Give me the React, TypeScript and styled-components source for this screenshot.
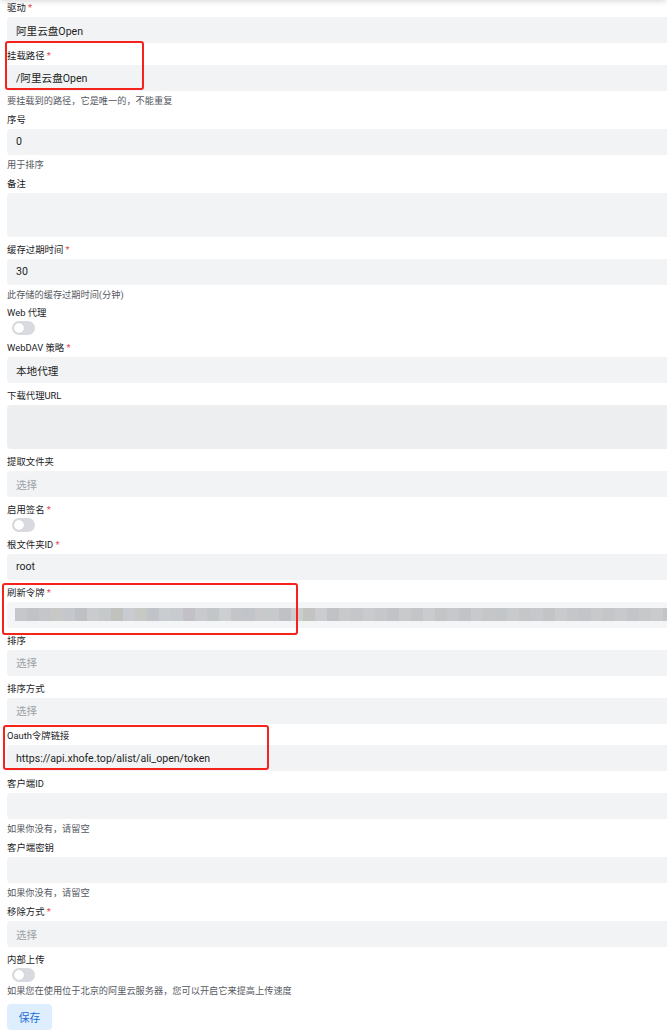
import styled, { createGlobalStyle } from "styled-components";

const GlobalStyle = createGlobalStyle`
  html, body {
    margin: 0;
    padding: 0;
    background: #ffffff;
    overflow: hidden;
  }
  body {
    font-family: Roboto, "Noto Sans CJK SC", sans-serif;
    color: #1b1b1f;
  }
`;

type Mark = { top: number; left: number; width: number; height: number };

type FieldType = {
  label: string;
  required?: boolean;
  kind: "input" | "textarea" | "switch";
  value?: string;
  placeholder?: string;
  helper?: string;
  hovered?: boolean;
  mosaic?: boolean;
  mark?: Mark;
};

const fields: FieldType[] = [
  { label: "驱动", required: true, kind: "input", value: "阿里云盘Open" },
  {
    label: "挂载路径",
    required: true,
    kind: "input",
    value: "/阿里云盘Open",
    helper: "要挂载到的路径，它是唯一的，不能重复",
    mark: { top: -8, left: -2, width: 139, height: 49 },
  },
  { label: "序号", kind: "input", value: "0", helper: "用于排序" },
  { label: "备注", kind: "textarea" },
  {
    label: "缓存过期时间",
    required: true,
    kind: "input",
    value: "30",
    helper: "此存储的缓存过期时间(分钟)",
  },
  { label: "Web 代理", kind: "switch" },
  { label: "WebDAV 策略", required: true, kind: "input", value: "本地代理" },
  { label: "下载代理URL", kind: "textarea", hovered: true },
  { label: "提取文件夹", kind: "input", placeholder: "选择" },
  { label: "启用签名", required: true, kind: "switch" },
  { label: "根文件夹ID", required: true, kind: "input", value: "root" },
  {
    label: "刷新令牌",
    required: true,
    kind: "input",
    mosaic: true,
    mark: { top: -3, left: -5, width: 296, height: 52 },
  },
  { label: "排序", kind: "input", placeholder: "选择" },
  { label: "排序方式", kind: "input", placeholder: "选择" },
  {
    label: "Oauth令牌链接",
    kind: "input",
    value: "https://api.xhofe.top/alist/ali_open/token",
    mark: { top: -4, left: -4, width: 266, height: 45 },
  },
  { label: "客户端ID", kind: "input", helper: "如果你没有，请留空" },
  { label: "客户端密钥", kind: "input", helper: "如果你没有，请留空" },
  { label: "移除方式", required: true, kind: "input", placeholder: "选择" },
  {
    label: "内部上传",
    kind: "switch",
    helper: "如果您在使用位于北京的阿里云服务器，您可以开启它来提高上传速度",
  },
];

// pixelated stand-in for the blurred token value
const mosaicColors = [
  "#c6c7ca", "#c2c1c6", "#c5c6c9", "#c8c9c6", "#c4c7cc", "#bfc0c3",
  "#cacbcd", "#c6c9ca", "#c1c1be", "#c8cbcf", "#c7cac4", "#c0c3c7",
  "#cacdcf", "#c7cace", "#c3c1c5", "#c9cacd", "#c2c6c8", "#cbcfcf",
  "#c4c5c9", "#c1c4c8", "#c9c9cb", "#c6cacc", "#bfc1c4", "#cbcdce",
  "#c3c4c2", "#cacccf", "#c0c2c6", "#c7c9ca", "#c4c6c9", "#c9cacc",
  "#c5c7ca", "#c2c3c6", "#c8cacb", "#c3c5c8", "#c9cbcd", "#c4c5c7",
  "#c6c8cb", "#c1c3c6", "#c8c9cc", "#c5c6c8", "#c3c6c9", "#c9cacb",
  "#c4c6c8", "#c7c8cb", "#c2c4c6", "#c8cacc", "#c5c6c9", "#c3c4c7",
  "#c7c9cb", "#c4c6c9", "#c8c9ca", "#c2c4c7", "#c6c8ca", "#c9cbcc",
  "#c4c5c8",
];

function mosaicGradient() {
  const step = 12;
  const stops = mosaicColors.map(
    (c, i) => `${c} ${i * step}px ${(i + 1) * step}px`
  );
  return `linear-gradient(90deg, ${stops.join(", ")})`;
}

export default function App() {
  return (
    <>
      <GlobalStyle />
      <HeaderShadow />
      <Page>
        <Form>
          {fields.map((f) => (
            <Field key={f.label}>
              <Label $tight={f.kind === "switch"}>
                {f.label}
                {f.required && <Star> *</Star>}
              </Label>
              {f.kind === "input" && (
                <Input $light={f.mosaic}>
                  {f.value && <Value>{f.value}</Value>}
                  {f.placeholder && <Placeholder>{f.placeholder}</Placeholder>}
                  {f.mosaic && (
                    <Mosaic style={{ backgroundImage: mosaicGradient() }} />
                  )}
                </Input>
              )}
              {f.kind === "textarea" && <TextArea $hovered={f.hovered} />}
              {f.kind === "switch" && (
                <Switch>
                  <Knob />
                </Switch>
              )}
              {f.helper && (
                <Helper $afterSwitch={f.kind === "switch"}>{f.helper}</Helper>
              )}
              {f.mark && (
                <RedMark
                  style={{
                    top: f.mark.top,
                    left: f.mark.left,
                    width: f.mark.width,
                    height: f.mark.height,
                  }}
                />
              )}
            </Field>
          ))}
          <SaveButton>保存</SaveButton>
        </Form>
      </Page>
    </>
  );
}

const HeaderShadow = styled.div`
  position: fixed;
  top: -10px;
  left: 0;
  right: 0;
  height: 10px;
  background: #ffffff;
  box-shadow: 0 1px 6px rgba(0, 0, 0, 0.16);
  z-index: 5;
`;

const Page = styled.div`
  width: 667px;
  box-sizing: border-box;
  overflow: hidden;
  padding: 1px 0 0 7px;
`;

const Form = styled.div`
  width: 672px;
  display: flex;
  flex-direction: column;
  gap: 5.9px;
`;

const Field = styled.div`
  position: relative;
  display: flex;
  flex-direction: column;
`;

const Label = styled.div<{ $tight?: boolean }>`
  font-size: 9.4px;
  line-height: 13px;
  margin-bottom: ${(p) => (p.$tight ? "2px" : "3px")};
  color: #1a1a1e;
`;

const Star = styled.span`
  color: #e5484d;
`;

const Input = styled.div<{ $light?: boolean }>`
  position: relative;
  height: 26px;
  border-radius: 4px;
  background: ${(p) => (p.$light ? "#f4f5f7" : "#f1f3f5")};
  display: flex;
  align-items: center;
  padding-left: 9px;
  overflow: hidden;
`;

const Value = styled.span`
  font-size: 10.6px;
  color: #1f1f23;
`;

const Placeholder = styled.span`
  font-size: 10.6px;
  color: #9da1a8;
`;

const Mosaic = styled.div`
  position: absolute;
  left: 8px;
  right: 0;
  top: 6px;
  height: 13px;
`;

const TextArea = styled.div<{ $hovered?: boolean }>`
  height: 44px;
  border-radius: 4px;
  background: ${(p) => (p.$hovered ? "#eceef0" : "#f1f3f5")};
`;

const Switch = styled.div`
  width: 23px;
  height: 14px;
  margin-left: 5px;
  border-radius: 7px;
  background: #d8dadf;
  display: flex;
  align-items: center;
  padding: 0 2px;
  box-sizing: border-box;
`;

const Knob = styled.div`
  width: 10px;
  height: 10px;
  border-radius: 50%;
  background: #ffffff;
  box-shadow: 0 0 1px rgba(0, 0, 0, 0.15);
`;

const Helper = styled.div<{ $afterSwitch?: boolean }>`
  margin-top: ${(p) => (p.$afterSwitch ? "3px" : "4px")};
  font-size: 9.2px;
  line-height: 12px;
  color: #55595f;
`;

const RedMark = styled.div`
  position: absolute;
  border: 2px solid #f5231b;
  border-radius: 3px;
  box-sizing: border-box;
  pointer-events: none;
`;

const SaveButton = styled.button`
  align-self: flex-start;
  width: 45px;
  height: 26px;
  border: none;
  border-radius: 4px;
  background: #dfeeff;
  color: #1b6cd4;
  font-family: Roboto, "Noto Sans CJK SC", sans-serif;
  font-size: 10.8px;
  padding: 0;
  margin-top: 1px;
`;
